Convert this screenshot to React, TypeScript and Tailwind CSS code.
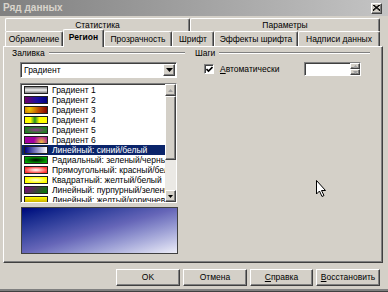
const raised =
  'border border-t-white border-l-white border-r-[#404040] border-b-[#404040] shadow-[inset_-1px_-1px_#808080]'
const sunken =
  'border border-t-[#808080] border-l-[#808080] border-r-white border-b-white shadow-[inset_1px_1px_#404040]'

const fills = [
  { label: 'Градиент 1', bg: 'bg-[linear-gradient(to_bottom,#7a7a7a,#f2f2f2_50%,#7a7a7a)]' },
  { label: 'Градиент 2', bg: 'bg-[linear-gradient(to_right,#70006a,#1a10a0_55%,#000080)]' },
  { label: 'Градиент 3', bg: 'bg-[radial-gradient(circle_at_20%_30%,#f0d000,#c05000_50%,#800000)]' },
  { label: 'Градиент 4', bg: 'bg-[linear-gradient(to_right,#ffff00,#ffff00_25%,#209020_45%,#ffff00_65%,#ffff00)]' },
  { label: 'Градиент 5', bg: 'bg-[radial-gradient(ellipse_at_center,#903890,#208020_75%)]' },
  { label: 'Градиент 6', bg: 'bg-[radial-gradient(circle_at_75%_85%,#f0c040,#a000a0_45%)]' },
  { label: 'Линейный: синий/белый', bg: 'bg-[linear-gradient(to_right,#000080,#ffffff)]' },
  { label: 'Радиальный: зеленый/черный', bg: 'bg-[radial-gradient(ellipse_at_center,#000000,#00a000_75%)]' },
  { label: 'Прямоугольный: красный/белый', bg: 'bg-[radial-gradient(ellipse_at_center,#ffffff,#ff3030_80%)]' },
  { label: 'Квадратный: желтый/белый', bg: 'bg-[radial-gradient(ellipse_at_center,#ffffe0,#ffff00_70%)]' },
  { label: 'Линейный: пурпурный/зеленый', bg: 'bg-[linear-gradient(135deg,#800080,#008000)]' },
  { label: 'Линейный: желтый/коричневый', bg: 'bg-[linear-gradient(to_bottom,#ffff00,#c0a000)]' },
]

const tabs = [
  { label: 'Обрамление', w: 'w-[58px]' },
  { label: 'Регион', w: 'w-[41px]', active: true },
  { label: 'Прозрачность', w: 'w-[68px]' },
  { label: 'Шрифт', w: 'w-[42px]' },
  { label: 'Эффекты шрифта', w: 'w-[84px]' },
  { label: 'Надписи данных', w: 'w-[82px]' },
]

export default function App() {
  return (
    <div className="relative w-[388px] h-[292px] overflow-hidden bg-[#d4d0c8] border-b border-b-[#404040] shadow-[inset_0_-2px_#808080] font-['Liberation_Sans',Arial,sans-serif] text-[8.5px] text-black leading-none">
      <TitleBar />
      <Tabs />
      <div className={`ml-[3px] w-[380px] h-[217px] flex ${raised}`}>
        <FillGroup />
        <StepsGroup />
      </div>
      <div className="flex justify-end gap-[3px] mt-[6px] pr-[8px]">
        <Button className="w-[64px]">OK</Button>
        <Button className="w-[64px]">Отмена</Button>
        <Button className="w-[63px]">
          <u>С</u>правка
        </Button>
        <Button className="w-[64px]">
          <u>В</u>осстановить
        </Button>
      </div>
      <Cursor />
    </div>
  )
}

function TitleBar() {
  return (
    <div className="h-[16px] flex items-center justify-between pl-[3px] pr-[6px] bg-linear-to-r from-[#808080] to-[#c4c4c4]">
      <span className="text-[10px] font-bold text-[#d8d4cc]">Ряд данных</span>
      <div className={`w-[11px] h-[11px] bg-[#d4d0c8] flex items-center justify-center ${raised}`}>
        <svg width="7" height="6" viewBox="0 0 7 6">
          <path d="M0 0 L7 6 M1 0 L7 5 M7 0 L0 6 M6 0 L0 5" stroke="#000" strokeWidth="1" />
        </svg>
      </div>
    </div>
  )
}

function Tabs() {
  const tab = 'border-t border-l border-t-white border-l-white border-r border-r-[#404040] shadow-[inset_-1px_0_#808080] rounded-t-[2px] flex items-center justify-center'
  return (
    <div className="ml-[5px] mt-[2px] w-[375px]">
      <div className="flex h-[13px]">
        <div className={`w-[185px] ${tab}`}>Статистика</div>
        <div className={`flex-1 ${tab}`}>Параметры</div>
      </div>
      <div className="flex items-end h-[15px]">
        {tabs.map((t) =>
          t.active ? (
            <div
              key={t.label}
              className={`${t.w} h-[18px] -mb-[1px] relative z-10 bg-[#d4d0c8] font-bold pb-[2px] ${tab}`}
            >
              {t.label}
            </div>
          ) : (
            <div key={t.label} className={`${t.w} h-[15px] ${tab}`}>
              {t.label}
            </div>
          ),
        )}
      </div>
    </div>
  )
}

function GroupHeader({ title }: { title: string }) {
  return (
    <div className="h-[12px] flex items-center gap-[4px]">
      <span>{title}</span>
      <div className="flex-1 h-[2px] border-t border-t-[#808080] border-b border-b-white" />
    </div>
  )
}

function FillGroup() {
  return (
    <div className="ml-[8px] w-[173px]">
      <GroupHeader title="Заливка" />
      <div className={`ml-[8px] mt-[3px] w-[157px] h-[16px] bg-white flex items-center justify-between pl-[3px] pr-[1px] ${sunken}`}>
        <span>Градиент</span>
        <div className={`w-[12px] h-[12px] bg-[#d4d0c8] flex items-center justify-center ${raised}`}>
          <svg width="7" height="4" viewBox="0 0 7 4">
            <path d="M0 0 H7 L3.5 4 Z" fill="#000" />
          </svg>
        </div>
      </div>
      <div className={`ml-[8px] mt-[5px] w-[157px] h-[120px] bg-white flex overflow-hidden ${sunken}`}>
        <div className="flex-1 overflow-hidden pt-[1px] pl-[1px]">
          {fills.map((f, i) => {
            const selected = i === 6
            return (
              <div
                key={f.label}
                className={`h-[10px] flex items-center gap-[4px] pl-[2px] whitespace-nowrap ${selected ? 'bg-[#0a246a] text-white' : ''}`}
              >
                <div className={`shrink-0 w-[24px] h-[8px] border border-[#202020] ${f.bg}`} />
                <span>{f.label}</span>
              </div>
            )
          })}
        </div>
        <ScrollBar />
      </div>
      <div className="ml-[9px] mt-[4px] w-[157px] h-[47px] border border-[#404040] bg-linear-to-br from-[#00007c] via-[#6666b8] to-[#eeeef8]" />
    </div>
  )
}

function ScrollBar() {
  return (
    <div className="w-[11px] flex flex-col bg-[#ebe9e5]">
      <div className={`h-[12px] bg-[#d4d0c8] flex items-center justify-center ${raised}`}>
        <svg width="5" height="3" viewBox="0 0 5 3">
          <path d="M0 3 H5 L2.5 0 Z" fill="#a0a0a0" />
        </svg>
      </div>
      <div className={`h-[64px] bg-[#d4d0c8] ${raised}`} />
      <div className="flex-1" />
      <div className={`h-[12px] bg-[#d4d0c8] flex items-center justify-center ${raised}`}>
        <svg width="5" height="3" viewBox="0 0 5 3">
          <path d="M0 0 H5 L2.5 3 Z" fill="#000" />
        </svg>
      </div>
    </div>
  )
}

function StepsGroup() {
  return (
    <div className="ml-[10px] w-[175px]">
      <GroupHeader title="Шаги" />
      <div className="mt-[3px] flex items-start justify-between pl-[9px] pr-[9px]">
        <div className="mt-[2px] flex items-center gap-[6px]">
          <div className={`w-[10px] h-[10px] bg-white flex items-center justify-center ${sunken}`}>
            <svg width="7" height="7" viewBox="0 0 7 7">
              <path d="M0.5 3 L2.5 5 L6.5 1" stroke="#000" strokeWidth="1.6" fill="none" />
            </svg>
          </div>
          <span>
            <u>А</u>втоматически
          </span>
        </div>
        <div className={`w-[57px] h-[14px] bg-white flex justify-end ${sunken}`}>
          <div className="w-[10px] flex flex-col">
            <div className={`flex-1 bg-[#d4d0c8] flex items-center justify-center ${raised}`}>
              <svg width="5" height="3" viewBox="0 0 5 3">
                <path d="M0 3 H5 L2.5 0 Z" fill="#a0a0a0" />
              </svg>
            </div>
            <div className={`flex-1 bg-[#d4d0c8] flex items-center justify-center ${raised}`}>
              <svg width="5" height="3" viewBox="0 0 5 3">
                <path d="M0 0 H5 L2.5 3 Z" fill="#a0a0a0" />
              </svg>
            </div>
          </div>
        </div>
      </div>
    </div>
  )
}

function Button({ className, children }: { className: string; children: React.ReactNode }) {
  return (
    <div className={`${className} h-[17px] bg-[#d4d0c8] flex items-center justify-center ${raised}`}>
      <span>{children}</span>
    </div>
  )
}

function Cursor() {
  return (
    <svg className="absolute left-[316px] top-[180px]" width="12" height="18" viewBox="0 0 12 18">
      <path
        d="M0.5 0.5 L0.5 14 L3.5 11 L6 16.5 L8 15.5 L5.5 10.5 L9.5 10.5 Z"
        fill="#fff"
        stroke="#000"
        strokeWidth="1"
      />
    </svg>
  )
}
